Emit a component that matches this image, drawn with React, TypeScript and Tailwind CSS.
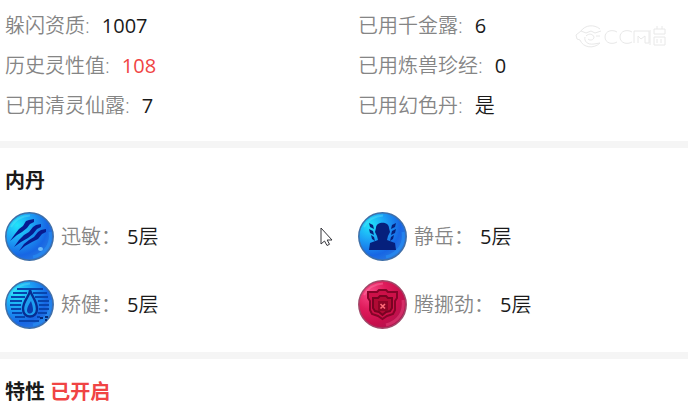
import type { ReactNode } from "react";

type Stat = { label: string; value: string; tone: string };

const stats: Stat[] = [
  { label: "躲闪资质", value: "1007", tone: "font-normal" },
  { label: "已用千金露", value: "6", tone: "font-normal" },
  { label: "历史灵性值", value: "108", tone: "text-[#f04444]" },
  { label: "已用炼兽珍经", value: "0", tone: "font-normal" },
  { label: "已用清灵仙露", value: "7", tone: "font-normal" },
  { label: "已用幻色丹", value: "是", tone: "font-[350]" },
];

function Orb({ id, red, children }: { id: string; red?: boolean; children: ReactNode }) {
  return (
    <svg viewBox="0 0 49 49" className="size-[49px] shrink-0" aria-hidden="true">
      <defs>
        <radialGradient id={id} cx="0.24" cy="0.26" r="0.85">
          <stop offset="0" stopColor={red ? "#fa4a88" : "#20e4fa"} />
          <stop offset="0.4" stopColor={red ? "#e01c5c" : "#1c9ff5"} />
          <stop offset="0.75" stopColor={red ? "#c80f4c" : "#1766e4"} />
          <stop offset="1" stopColor={red ? "#b01450" : "#2a7ae0"} />
        </radialGradient>
      </defs>
      <circle cx="24.5" cy="24.5" r="23.7" fill={`url(#${id})`} stroke={red ? "#a04868" : "#3f6fa8"} strokeWidth="1.5" />
      <path d="M6 15C10 8 16 4 25 3.500" fill="none" stroke={red ? "#ff86ac" : "#5ce4f5"} strokeWidth="2" opacity="0.4" />
      <path d="M45 20C47 32 40 42 28 45" fill="none" stroke={red ? "#f7588d" : "#2ba2ff"} strokeWidth="3" opacity="0.4" />
      {children}
    </svg>
  );
}

function Claws() {
  return (
    <Orb id="orb-claws">
      <g fill="#071b90">
        <path d="M5 29L10 22L14 17L18 14L21 9L24 8L29 7L29 10L25 12L22 16L17 20L12 23Z" />
        <path d="M9 35L14 28L19 23L24 20L28 15L31 13L36 12L36 15L32 17L28 22L23 26L16 30Z" />
        <path d="M14 39L19 32L24 28L29 25L33 20L36 18L41 17L41 20L37 22L33 27L27 30L20 34Z" />
      </g>
      <ellipse cx="35.500" cy="37" rx="2.500" ry="2" fill="#77c8ff" opacity="0.85" />
    </Orb>
  );
}

function Bust() {
  return (
    <Orb id="orb-bust">
      <g fill="#06207c">
        <path d="M18 16C18 9 31 9 31 16L32 20L30 24L29 28L37 31L38 38H11L12 31L20 28L19 24L17 20Z" />
        <path d="M11 11L15 13L16 17L12 15ZM11 17L15 19L16 23L12 21ZM13 23L16 25L17 29L14 27Z" />
        <path d="M38 11L34 13L33 17L37 15ZM38 17L34 19L33 23L37 21ZM36 23L33 25L32 29L35 27Z" />
      </g>
    </Orb>
  );
}

function Drop() {
  return (
    <Orb id="orb-drop">
      <path
        d="M12 9H38M8 13H22M28 13H42M6 17H20M30 17H43M5 21H17M33 21H44M5 25H16M34 25H44M6 29H16M34 29H44M7 33H17M33 33H42M10 37H20M32 37H35M14 41H34"
        stroke="#0744ad"
        strokeWidth="1.800"
      />
      <path d="M25 10C25 16 18 20 18 29C18 39 32 39 32 29C32 21 27 17 25 10Z" fill="#1e9eef" stroke="#072d91" strokeWidth="2.400" />
      <path d="M26 21C23 26 22 28 22 31C23 35 28 34 28 30C28 27 27 24 26 21Z" fill="#0a3cae" />
      <path d="M35 38H38M40 37H43M40 40H42" stroke="#062b78" strokeWidth="2" />
    </Orb>
  );
}

function Shield() {
  return (
    <Orb id="orb-shield" red>
      <path d="M10 12H19L21 10H28L30 12H39V18L37 21V30L35 34L29 36L24.500 39L20 36L14 34L12 30V21L10 18Z" fill="#cc1048" stroke="#840428" strokeWidth="2" />
      <path d="M15 18H20L22 16H28L30 18H34V28L32 31L28 32L24.500 35L21 32L17 31L15 28Z" fill="#b00a34" stroke="#780322" strokeWidth="2" />
      <rect x="20" y="21" width="10" height="10" fill="#8c0526" />
      <path d="M22.500 24L27 28.500M27 24L22.500 28.500" stroke="#ff6c79" strokeWidth="1.600" />
    </Orb>
  );
}

const pills = [
  { name: "迅敏", level: 5, icon: <Claws /> },
  { name: "静岳", level: 5, icon: <Bust /> },
  { name: "矫健", level: 5, icon: <Drop /> },
  { name: "腾挪劲", level: 5, icon: <Shield /> },
];

function Watermark() {
  return (
    <svg viewBox="0 0 94 26" className="absolute top-6 right-5 h-[26px] w-[94px]" fill="none" stroke="#e8e8e8" strokeWidth="1" aria-hidden="true">
      <path d="M26 5C20 0 11 1 7 7L2 11L3 15L6 16C9 24 20 25 26 19L20 20C13 21 10 17 11 13M7 7L12 9L17 7L21 9L27 7M22 12L26 12M12 12C15 9 19 10 20 13C20 16 16 17 14 15" />
      <path d="M43 8C38 5 31 7 31 13C31 19 38 21 43 18M58 8C53 5 46 7 46 13C46 19 53 21 58 18" />
      <path d="M60 19V7H75V19H71V12L67 15L64 12V19M76 6V21" />
      <path d="M80 5H91V10H80ZM80 13H91V21H80ZM83 2V5M88 2V5M83 15V19M87 15V19" />
    </svg>
  );
}

function Cursor() {
  return (
    <svg viewBox="0 0 13 20" className="absolute top-[227px] left-[320px] h-5 w-[13px]" aria-hidden="true">
      <path d="M1 1V17L4.500 14L7 18.500L9.500 17.300L7.200 13H12Z" fill="white" stroke="#34343a" strokeWidth="1" />
    </svg>
  );
}

export default function App() {
  return (
    <main className="relative bg-white font-['Open_Sans','Noto_Sans_CJK_SC',sans-serif] text-xl text-[#1a1a1a]">
      <section className="border-b-[7px] border-[#f5f5f5] pt-[6px] pb-[15px]">
        <dl className="grid grid-cols-2 gap-x-[23px] pl-[5px]">
          {stats.map((s) => (
            <div key={s.label} className="flex h-10 items-center gap-3">
              <dt className="font-[350] text-[#858585]">{s.label}:</dt>
              <dd className={s.tone}>{s.value}</dd>
            </div>
          ))}
        </dl>
      </section>

      <section className="border-b-[7px] border-[#f5f5f5] pt-[17px] pb-[23px]">
        <h2 className="mb-[15px] pl-[5px] leading-8 font-bold">内丹</h2>
        <dl className="grid grid-cols-2 gap-x-[23px] gap-y-[19px] pl-[5px]">
          {pills.map((p) => (
            <div key={p.name} className="flex items-center">
              {p.icon}
              <dt className="ml-[7px] font-[350] text-[#858585]">{p.name}：</dt>
              <dd className="ml-[6px]">
                {p.level}
                <span className="font-[350]">层</span>
              </dd>
            </div>
          ))}
        </dl>
      </section>

      <section className="pt-[17px] pl-[5px]">
        <h2 className="leading-8 font-bold">
          特性 <span className="text-[#f04444]">已开启</span>
        </h2>
      </section>

      <Watermark />
      <Cursor />
    </main>
  );
}
